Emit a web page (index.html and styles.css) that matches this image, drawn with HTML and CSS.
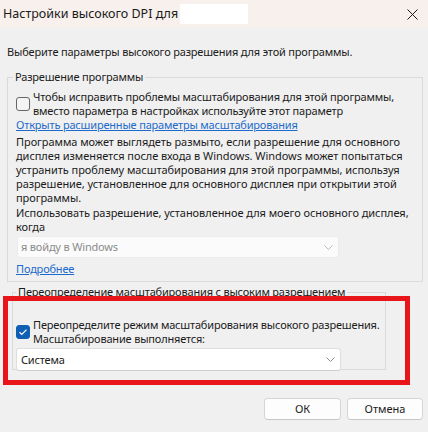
FILE: index.html
```html
<!DOCTYPE html>
<html lang="ru">
<head>
<meta charset="utf-8">
<title>Настройки высокого DPI</title>
<link rel="stylesheet" href="styles.css">
</head>
<body>
<div class="window">
  <header class="titlebar">
    <span class="title">Настройки высокого DPI для</span>
    <span class="app-name"></span>
    <button class="close" aria-label="Закрыть">
      <svg width="11" height="11" viewBox="0 0 11 11"><path d="M0.5 0.5 L10.5 10.5 M10.5 0.5 L0.5 10.5" stroke="#1b1b1b" stroke-width="1" fill="none"/></svg>
    </button>
  </header>

  <main class="content">
    <p class="intro">Выберите параметры высокого разрешения для этой программы.</p>

    <fieldset class="group group-app">
      <legend>Разрешение программы</legend>
      <label class="check">
        <span class="box"></span>
        <span class="check-text">Чтобы исправить проблемы масштабирования для этой программы,<br>вместо параметра в настройках используйте этот параметр</span>
      </label>
      <div class="link-row link-advanced"><a class="link" href="#">Открыть расширенные параметры масштабирования</a></div>
      <p class="note">Программа может выглядеть размыто, если разрешение для основного<br>дисплея изменяется после входа в Windows. Windows может попытаться<br>устранить проблему масштабирования для этой программы, используя<br>разрешение, установленное для основного дисплея при открытии этой<br>программы.<br>Использовать разрешение, установленное для моего основного дисплея,<br>когда</p>
      <div class="dropdown dropdown-disabled">
        <span>я войду в Windows</span>
        <svg width="9" height="5" viewBox="0 0 9 5"><path d="M0.5 0.5 L4.5 4.5 L8.5 0.5" stroke="#b8b8b8" stroke-width="1" fill="none"/></svg>
      </div>
      <div class="link-row link-more"><a class="link" href="#">Подробнее</a></div>
    </fieldset>

    <fieldset class="group group-override">
      <legend>Переопределение масштабирования с высоким разрешением</legend>
      <label class="check check-override">
        <span class="box box-checked">
          <svg width="10" height="8" viewBox="0 0 10 8"><path d="M1.5 4.2 L3.8 6.4 L8.5 1.6" stroke="#ffffff" stroke-width="1.2" fill="none"/></svg>
        </span>
        <span class="check-text">Переопределите режим масштабирования высокого разрешения.<br>Масштабирование выполняется:</span>
      </label>
      <div class="dropdown dropdown-system">
        <span>Система</span>
        <svg width="9" height="5" viewBox="0 0 9 5"><path d="M0.5 0.5 L4.5 4.5 L8.5 0.5" stroke="#8a8a8a" stroke-width="1" fill="none"/></svg>
      </div>
    </fieldset>

    <div class="buttons">
      <button class="btn btn-ok">ОК</button>
      <button class="btn btn-cancel">Отмена</button>
    </div>
  </main>

  <div class="highlight"></div>
</div>
</body>
</html>
```

FILE: styles.css
```css
* {
  box-sizing: border-box;
}

html, body {
  margin: 0;
  padding: 0;
  background: #f0f0f0;
}

body {
  font-family: "Noto Sans", "Liberation Sans", sans-serif;
  font-size: 11px;
  line-height: 14.2px;
  letter-spacing: -0.18px;
  color: #1b1b1b;
}

.window {
  position: relative;
  width: 428px;
  height: 432px;
  overflow: hidden;
  background: #f0f0f0;
}

/* title bar */
.titlebar {
  display: flex;
  align-items: center;
  height: 28px;
  padding-left: 3px;
  background: #f8f0ec;
}

.title {
  font-size: 12.5px;
  letter-spacing: 0;
  white-space: nowrap;
}

.app-name {
  width: 68px;
  height: 20px;
  margin-left: 2px;
  background: #ffffff;
}

.close {
  display: flex;
  margin-left: auto;
  margin-right: 10px;
  padding: 0;
  border: 0;
  background: none;
}

/* dialog body */
.content {
  padding: 0 5px 0 7px;
}

.intro {
  margin: 17px 0 0;
  white-space: nowrap;
}

.group {
  margin: 0;
  border: 1px solid #dadada;
  min-width: 0;
}

.group legend {
  padding: 0 2px;
  white-space: nowrap;
}

.group-app {
  margin-top: 11px;
  padding: 6px 6px 5px 8px;
}

.group-app legend {
  margin-left: -3px;
}

.group-override {
  width: 374px;
  margin: 3px 0 0 5px;
  padding: 19px 6px 0 3px;
}

.check {
  display: flex;
  align-items: center;
  gap: 3px;
}

.check-text {
  line-height: 13.5px;
  white-space: nowrap;
}

.check-override .check-text {
  line-height: 14px;
}

.box {
  flex: none;
  display: flex;
  align-items: center;
  justify-content: center;
  width: 14px;
  height: 14px;
  border: 1px solid #666666;
  border-radius: 3px;
  background: #f4f4f4;
}

.box-checked {
  border-color: #0f5fb5;
  background: #0f5fb5;
}

.link-row {
  white-space: nowrap;
}

.link-advanced {
  margin-top: 1px;
}

.link {
  color: #1c6bcc;
  text-decoration: underline;
}

.note {
  margin: 2px 0 0;
  letter-spacing: -0.06px;
  white-space: nowrap;
}

.dropdown {
  display: flex;
  align-items: center;
  justify-content: space-between;
  border-radius: 3px;
}

.dropdown-disabled {
  width: 322px;
  height: 22px;
  margin: 2px 0 0 1px;
  padding: 0 5px 0 3px;
  background: #fbfbfb;
  border: 1px solid #ececec;
  color: #8c8c8c;
}

.link-more {
  margin-top: 4px;
}

.dropdown-system {
  width: 325px;
  height: 23px;
  margin: 2px 0 -2px;
  padding: 0 5px 0 4px;
  background: #ffffff;
  border: 1px solid #dedede;
  border-bottom-color: #cfcfcf;
}

/* dialog buttons */
.buttons {
  display: flex;
  justify-content: flex-end;
  gap: 6px;
  margin-top: 28px;
}

.btn {
  height: 22px;
  padding: 0;
  font: inherit;
  letter-spacing: 0;
  color: #1b1b1b;
  background: #fdfdfd;
  border: 1px solid #d6d6d6;
  border-bottom-color: #c8c8c8;
  border-radius: 4px;
}

.btn-ok {
  width: 77px;
}

.btn-cancel {
  width: 76px;
}

/* red annotation frame drawn over the override group */
.highlight {
  position: absolute;
  left: 3px;
  top: 296px;
  width: 407px;
  height: 89px;
  border: 5px solid #e8151b;
  pointer-events: none;
}
```
